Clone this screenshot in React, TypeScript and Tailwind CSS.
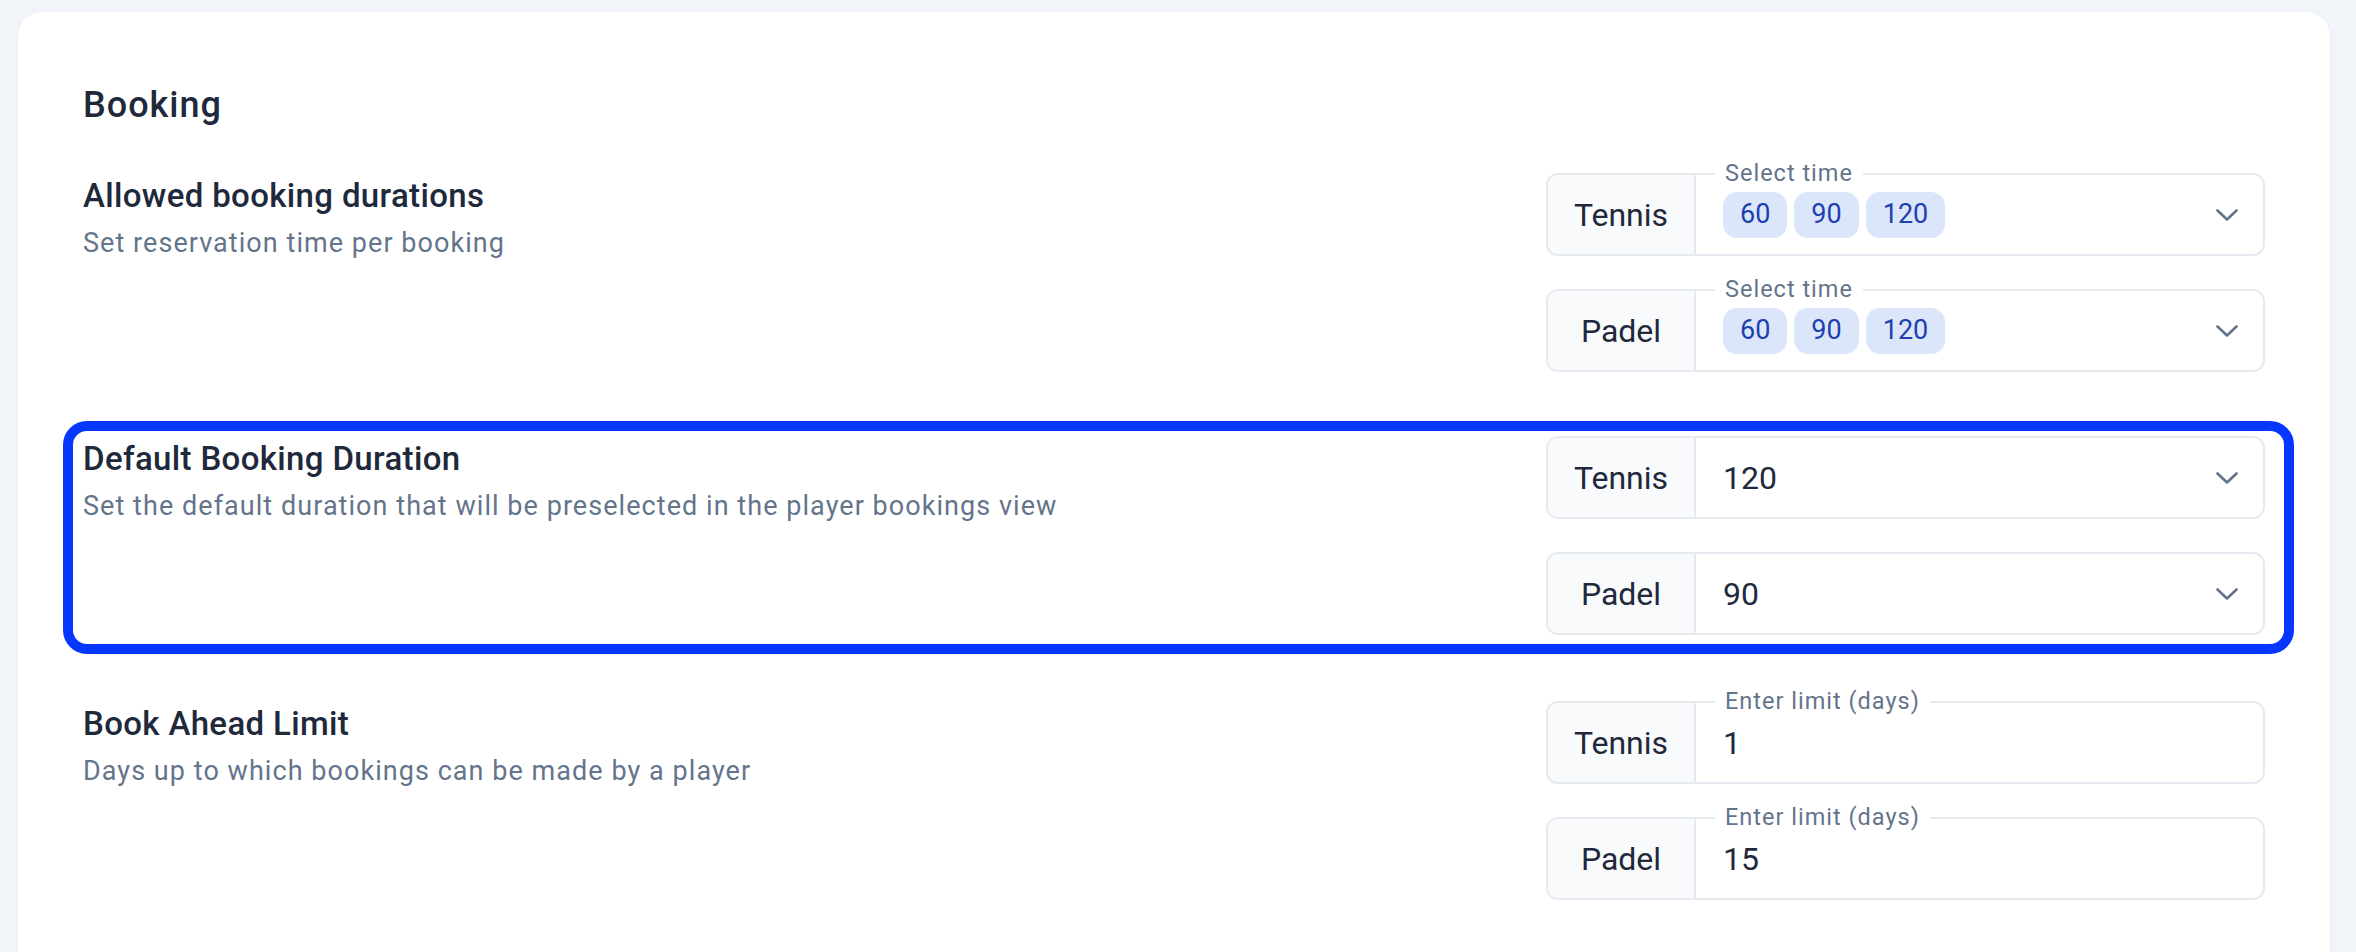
import React from "react";

const FONT = { fontFamily: 'Roboto, "Noto Sans", Arial, sans-serif' };

function Chevron() {
  return (
    <svg width="22" height="12" viewBox="0 0 22 12" className="ml-auto shrink-0" fill="none">
      <polyline points="1.5,1.5 11,10.5 20.5,1.5" stroke="#64748b" strokeWidth="2.6" strokeLinecap="round" strokeLinejoin="round" />
    </svg>
  );
}

function Chip({ children }: { children: React.ReactNode }) {
  return (
    <span className="flex h-[46px] items-center rounded-[14px] bg-[#dce6fb] px-[17px] text-[27px] text-[#1e40af]">
      {children}
    </span>
  );
}

function Field({
  sport,
  label,
  chevron,
  children,
}: {
  sport: string;
  label?: string;
  chevron?: boolean;
  children: React.ReactNode;
}) {
  return (
    <div className="relative flex h-[83px] rounded-[12px] border-2 border-[#e6eaf0]">
      <div className="flex w-[148px] items-center justify-center rounded-l-[10px] border-r-2 border-[#e6eaf0] bg-[#f8fafc] text-[32px] text-[#1e293b]">
        {sport}
      </div>
      <div className="flex flex-1 items-center pl-[27px] pr-[25px]">
        {children}
        {chevron && <Chevron />}
      </div>
      {label && (
        <span className="absolute left-[167px] top-[-16px] bg-white px-[10px] text-[23.5px] leading-[28px] tracking-[1px] text-[#64748b]">
          {label}
        </span>
      )}
    </div>
  );
}

function Row({
  title,
  desc,
  children,
}: {
  title: string;
  desc: string;
  children: React.ReactNode;
}) {
  return (
    <div className="flex items-start justify-between">
      <div className="pt-[3px]">
        <div className="text-[33px] font-medium leading-[40px] tracking-[0.35px] text-[#1e293b]">{title}</div>
        <div className="mt-[9px] text-[27px] leading-[36px] tracking-[1.05px] text-[#64748b]">{desc}</div>
      </div>
      <div className="flex w-[719px] flex-col gap-[33px]">{children}</div>
    </div>
  );
}

function Chips() {
  return (
    <div className="flex gap-[7px]">
      <Chip>60</Chip>
      <Chip>90</Chip>
      <Chip>120</Chip>
    </div>
  );
}

export default function App() {
  return (
    <div style={FONT} className="h-[952px] overflow-hidden bg-[#f1f5f9] pl-[18px] pr-[26px] pt-[12px]">
      <div className="h-[1000px] rounded-[24px] bg-white px-[65px] pt-[71px] shadow-[0_1px_3px_rgba(15,23,42,0.08)]">
        <h2 className="mb-[46px] text-[36px] font-medium leading-[44px] tracking-[1px] text-[#1e293b]">Booking</h2>

        <Row title="Allowed booking durations" desc="Set reservation time per booking">
          <Field sport="Tennis" label="Select time" chevron>
            <Chips />
          </Field>
          <Field sport="Padel" label="Select time" chevron>
            <Chips />
          </Field>
        </Row>

        <div className="relative mt-[64px]">
          <Row
            title="Default Booking Duration"
            desc="Set the default duration that will be preselected in the player bookings view"
          >
            <Field sport="Tennis" chevron>
              <span className="text-[32px] text-[#1e293b]">120</span>
            </Field>
            <Field sport="Padel" chevron>
              <span className="text-[32px] text-[#1e293b]">90</span>
            </Field>
          </Row>
          <div className="pointer-events-none absolute bottom-[-19px] left-[-20px] right-[-29px] top-[-15px] rounded-[24px] border-[10px] border-[#0537ff]" />
        </div>

        <div className="mt-[66px]">
          <Row title="Book Ahead Limit" desc="Days up to which bookings can be made by a player">
            <Field sport="Tennis" label="Enter limit (days)">
              <span className="text-[32px] text-[#1e293b]">1</span>
            </Field>
            <Field sport="Padel" label="Enter limit (days)">
              <span className="text-[32px] text-[#1e293b]">15</span>
            </Field>
          </Row>
        </div>
      </div>
    </div>
  );
}
